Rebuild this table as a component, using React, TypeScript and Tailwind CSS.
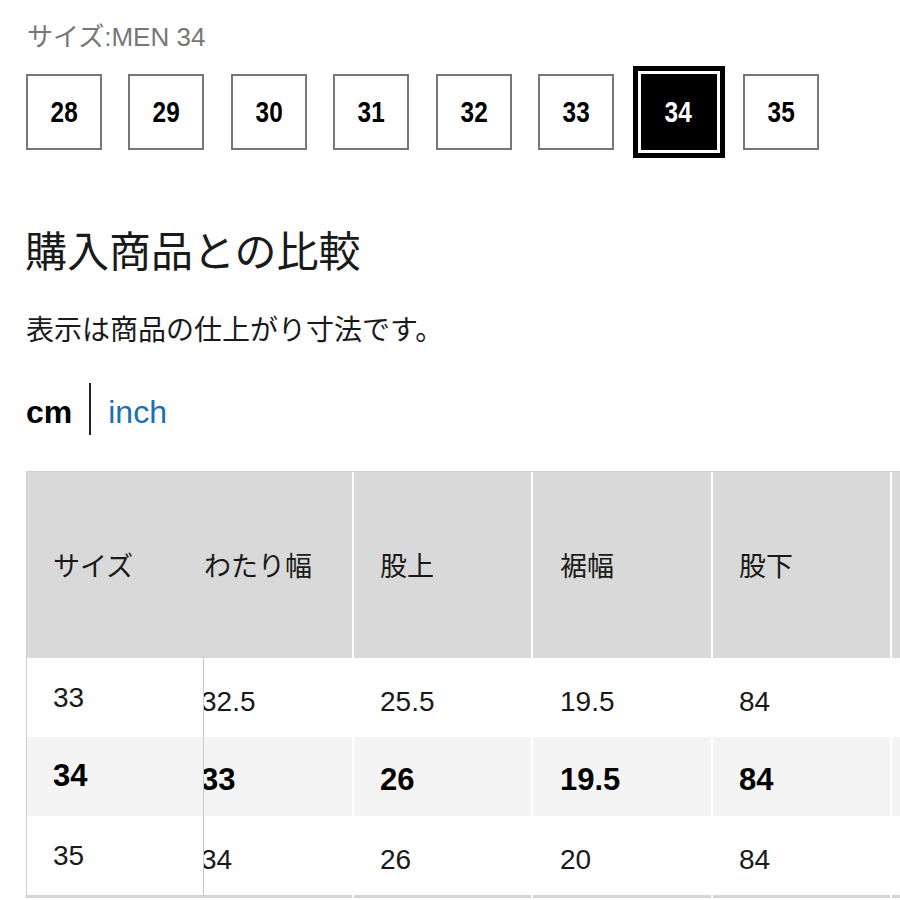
const sizes = ['28', '29', '30', '31', '32', '33', '34', '35'];

const rows = [
  { size: '33', vals: ['32.5', '25.5', '19.5', '84'], bold: false, bg: 'bg-white' },
  { size: '34', vals: ['33', '26', '19.5', '84'], bold: true, bg: 'bg-[#f4f4f4]' },
  { size: '35', vals: ['34', '26', '20', '84'], bold: false, bg: 'bg-white' },
];

function Digits({ children }: { children: string }) {
  return (
    <span className="inline-block scale-x-[0.84] font-bold text-[29px] leading-none font-['Liberation_Sans',sans-serif]">
      {children}
    </span>
  );
}

export default function App() {
  return (
    <div className="w-[900px] h-[900px] overflow-hidden bg-white text-[#1a1a1a] font-['Liberation_Sans','Noto_Sans_CJK_JP',sans-serif]">
      <div className="pl-[27px] pt-[24px] text-[26px] leading-[26px] text-[#777777]">サイズ:MEN 34</div>

      <div className="flex gap-[26.43px] pl-[26px] mt-[24px]">
        {sizes.map((s) =>
          s === '34' ? (
            <div
              key={s}
              className="w-[76px] h-[76px] shrink-0 bg-black outline-5 outline-black outline-offset-3 flex items-center justify-center text-white"
            >
              <Digits>{s}</Digits>
            </div>
          ) : (
            <div
              key={s}
              className="w-[76px] h-[76px] shrink-0 border-2 border-[#777777] bg-white flex items-center justify-center text-black"
            >
              <Digits>{s}</Digits>
            </div>
          )
        )}
      </div>

      <div className="mt-[78px] pl-[25px] text-[42px] leading-[42px] text-[#1a1a1a] font-['Noto_Sans_CJK_JP',sans-serif]">
        購入商品との比較
      </div>

      <div className="mt-[44px] pl-[26px] text-[28px] leading-[28px] text-[#1a1a1a] font-['Noto_Sans_CJK_JP',sans-serif]">
        表示は商品の仕上がり寸法です。
      </div>

      <div className="mt-[41px] pl-[26px] flex items-center h-[52px] text-[32px] leading-none">
        <span className="font-bold text-black pt-[6px]">cm</span>
        <span className="w-[2px] h-[52px] bg-[#222] ml-[17px] mr-[17px]"></span>
        <span className="text-[#1a6fb5] pt-[6px]">inch</span>
      </div>

      <div className="mt-[36px] ml-[26px] w-[874px] border-l border-t border-[#d0d0d0]">
        <div className="flex h-[186px] bg-[#d9d9d9] items-center text-[27px] text-[#1a1a1a] font-['Noto_Sans_CJK_JP',sans-serif]">
          <div className="w-[177px] shrink-0 pl-[26px]">サイズ</div>
          <div className="w-[148px] shrink-0">わたり幅</div>
          <div className="w-[179px] shrink-0 h-full border-l-2 border-white pl-[26px] flex items-center">股上</div>
          <div className="w-[180px] shrink-0 h-full border-l-2 border-white pl-[27px] flex items-center">裾幅</div>
          <div className="w-[179px] shrink-0 h-full border-l-2 border-white pl-[26px] flex items-center">股下</div>
          <div className="flex-1 h-full border-l-2 border-white"></div>
        </div>

        {rows.map((r) => (
          <div
            key={r.size}
            className={`flex h-[79px] ${r.bg} ${r.bold ? 'font-bold text-[31px] text-black' : 'text-[28px] text-[#1a1a1a]'}`}
          >
            <div className="w-[177px] shrink-0 h-full border-r border-[#c8c8c8] pl-[26px] flex items-center">
              {r.size}
            </div>
            <div className="w-[148px] shrink-0 h-full overflow-hidden flex items-center pt-[8px]">
              <span className="ml-[-3px]">{r.vals[0]}</span>
            </div>
            <div className="w-[179px] shrink-0 h-full border-l-2 border-white pl-[26px] flex items-center pt-[8px]">
              {r.vals[1]}
            </div>
            <div className="w-[180px] shrink-0 h-full border-l-2 border-white pl-[27px] flex items-center pt-[8px]">
              {r.vals[2]}
            </div>
            <div className="w-[179px] shrink-0 h-full border-l-2 border-white pl-[26px] flex items-center pt-[8px]">
              {r.vals[3]}
            </div>
            <div className="flex-1 h-full border-l-2 border-white"></div>
          </div>
        ))}

        <div className="flex h-[3px]">
          <div className="w-[325px] shrink-0 bg-[#d4d4d4]"></div>
          <div className="w-[179px] shrink-0 border-l-2 border-white bg-[#d4d4d4]"></div>
          <div className="w-[180px] shrink-0 border-l-2 border-white bg-[#d4d4d4]"></div>
          <div className="w-[179px] shrink-0 border-l-2 border-white bg-[#d4d4d4]"></div>
          <div className="flex-1 border-l-2 border-white bg-[#d4d4d4]"></div>
        </div>
      </div>
    </div>
  );
}
